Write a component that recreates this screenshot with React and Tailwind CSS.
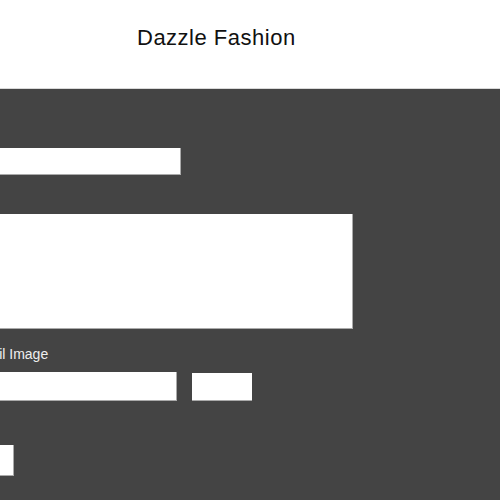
const App = () => {
  return (
    <div className="w-[500px] h-[500px] overflow-hidden bg-white font-['Liberation_Sans',sans-serif]">
      <header className="h-[88px] bg-white pl-[137px] pt-[24px]">
        <h1 className="text-[22px] leading-[28px] text-[#111] tracking-[0.5px]">Dazzle Fashion</h1>
      </header>

      <main className="h-[412px] bg-[#444] border-t border-[#d9d9d9] pt-[59px]">
        <input className="block w-[181px] h-[27px] bg-white border-r border-b border-[#aaa] outline-none" />

        <textarea className="block mt-[39px] w-[353px] h-[115px] bg-white border-r border-b border-[#aaa] resize-none outline-none" />

        <div className="mt-[17px] h-[16px] overflow-hidden whitespace-nowrap">
          <label className="block -ml-[60px] text-[14px] leading-[16px] text-[#eee]">Thumbnail Image</label>
        </div>

        <div className="mt-[10px] flex items-start gap-[15px]">
          <input className="block w-[177px] h-[29px] bg-white border-r border-b border-[#aaa] outline-none" />
          <button className="mt-[1px] w-[60px] h-[28px] bg-white border-b border-[#aaa]"></button>
        </div>

        <button className="block mt-[44px] w-[14px] h-[31px] bg-white border-r border-b border-[#aaa]"></button>
      </main>
    </div>
  );
};

export default App;
